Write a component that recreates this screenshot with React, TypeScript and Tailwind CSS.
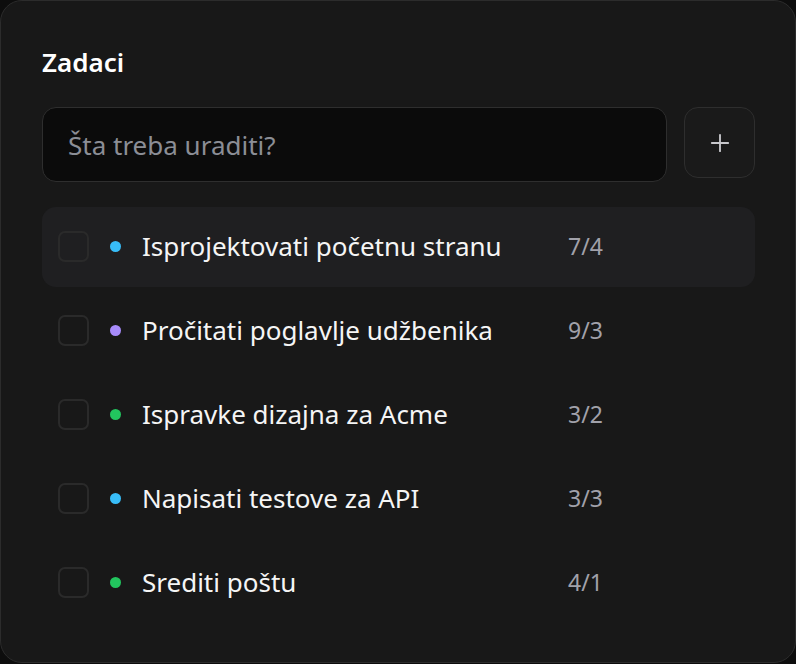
import { Plus } from "lucide-react";

const tasks = [
  { title: "Isprojektovati početnu stranu", due: "7/4", color: "bg-[#38bdf8]", active: true },
  { title: "Pročitati poglavlje udžbenika", due: "9/3", color: "bg-[#a78bfa]" },
  { title: "Ispravke dizajna za Acme", due: "3/2", color: "bg-[#22c55e]" },
  { title: "Napisati testove za API", due: "3/3", color: "bg-[#38bdf8]" },
  { title: "Srediti poštu", due: "4/1", color: "bg-[#22c55e]" },
];

const App = () => {
  return (
    <div
      className="min-h-screen bg-[#0d0d0d]"
      style={{ fontFamily: '"Noto Sans", "Open Sans", sans-serif' }}
    >
      <div className="w-[796px] h-[663px] rounded-[22px] border border-[#2c2c2c] bg-[#181818] pl-[41px] pr-[40px] pt-[40px] pb-[40px]">
        <h1 className="text-[26px] leading-[42px] font-semibold text-white">Zadaci</h1>
        <div className="mt-[24px] flex items-start gap-[17px]">
          <input
            type="text"
            placeholder="Šta treba uraditi?"
            className="w-[625px] h-[75px] rounded-[14px] border border-[#2e2e2e] bg-[#0b0b0b] pl-[25px] text-[26px] text-white placeholder:text-[#8b8e96] outline-none"
          />
          <button className="flex h-[71px] w-[71px] items-center justify-center rounded-[14px] border border-[#2e2e2e] bg-[#1a1a1a] text-[#c8c8cc]">
            <Plus className="size-[28px]" strokeWidth={1.6} />
          </button>
        </div>
        <ul className="mt-[25px] flex flex-col gap-[4px]">
          {tasks.map((task, index) => (
            <li
              key={index}
              className={`flex h-[80px] items-center rounded-[14px] pl-[16px] pb-[2px] ${
                task.active ? "bg-[#1f1f21]" : ""
              }`}
            >
              <span className="size-[31px] shrink-0 rounded-[7px] border-2 border-[#2a2a2a]"></span>
              <span className={`ml-[21px] size-[11px] shrink-0 rounded-full ${task.color}`}></span>
              <span className="ml-[21px] w-[426px] text-[26px] text-[#f5f5f5]">{task.title}</span>
              <span className="text-[23px] text-[#a1a1aa]">{task.due}</span>
            </li>
          ))}
        </ul>
      </div>
    </div>
  );
};

export default App;
